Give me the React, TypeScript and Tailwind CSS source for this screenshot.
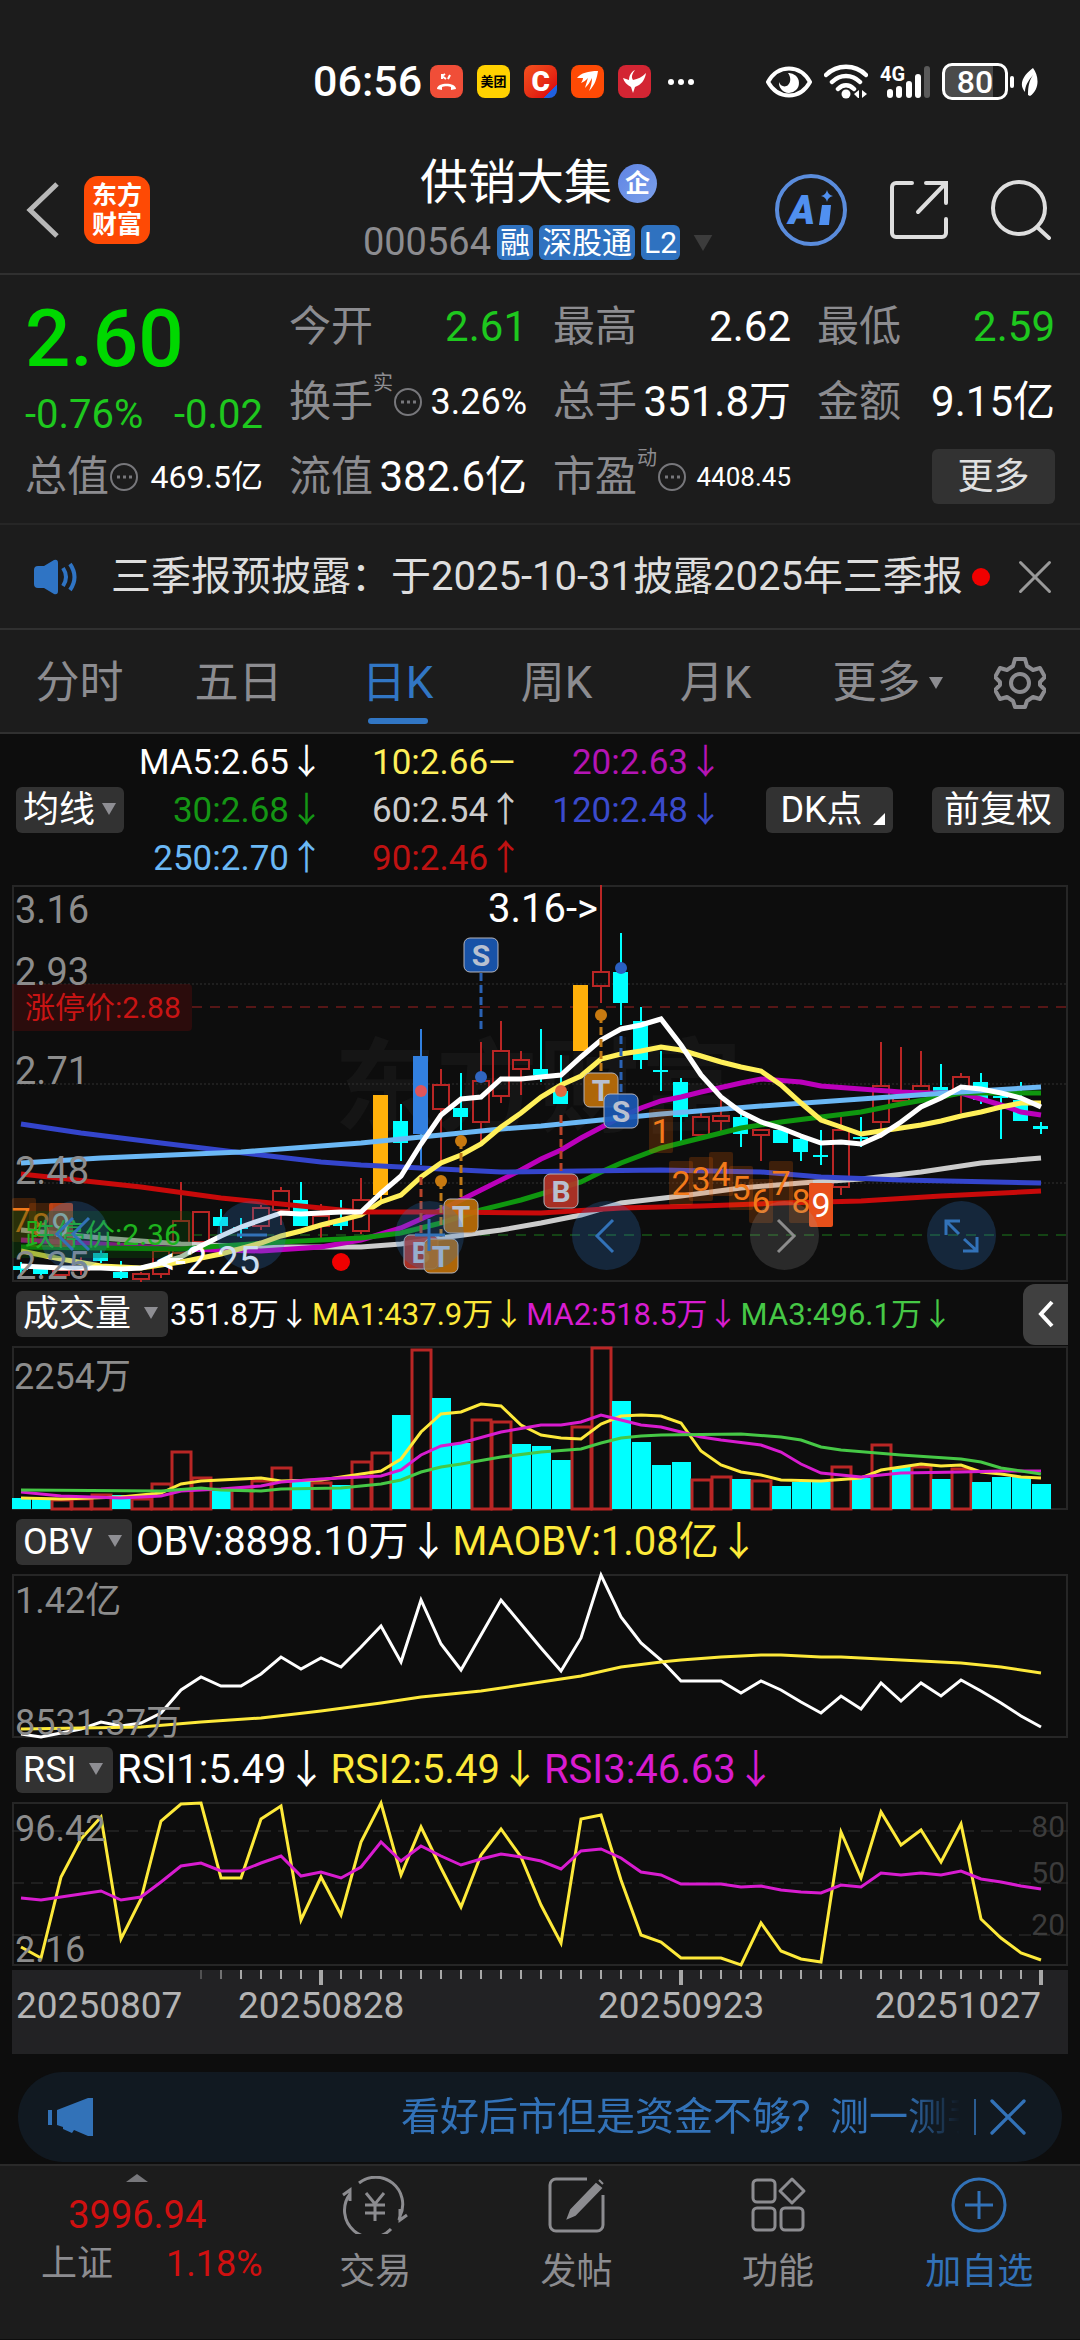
import { ReactNode } from 'react'
import { X } from 'lucide-react'

type Point = [number, number]
type Candle = [kind: string, high: number, top: number, bottom: number, low: number]

const CHART_W = 1056
const STEP = 20
const x = (i: number) => 9 + i * STEP
const sparse = (pts: Point[]) => pts.map(([i, y]) => `${x(i)},${y}`).join(' ')
const dense = (ys: number[]) => ys.map((y, i) => `${x(i)},${y}`).join(' ')

const RED = '#b92625'
const CYAN = '#00ffff'

// r = up, c = down, o / b = highlighted days
const candles: Candle[] = [
  ['c', 377, 381, 385, 389], ['c', 384, 384, 389, 391], ['r', 380, 385, 390, 392], ['r', 372, 378, 385, 390],
  ['c', 364, 368, 376, 378], ['c', 376, 387, 393, 394], ['r', 387, 389, 394, 397], ['r', 362, 366, 389, 393],
  ['r', 297, 336, 368, 372], ['r', 327, 327, 357, 365], ['c', 324, 332, 341, 348], ['c', 333, 342, 344, 353],
  ['r', 320, 323, 341, 345], ['r', 302, 306, 325, 340], ['c', 297, 315, 341, 341], ['r', 319, 331, 341, 357],
  ['c', 315, 335, 341, 345], ['r', 293, 315, 346, 349], ['o', 210, 210, 310, 315], ['c', 219, 236, 258, 276],
  ['b', 144, 171, 249, 280], ['r', 184, 200, 224, 277], ['c', 188, 223, 232, 245], ['r', 157, 196, 237, 260],
  ['r', 136, 166, 211, 218], ['r', 166, 175, 184, 210], ['c', 144, 184, 190, 197], ['c', 170, 206, 219, 219],
  ['o', 100, 100, 166, 166], ['r', 0, 87, 101, 118], ['c', 48, 87, 118, 140], ['c', 122, 136, 175, 184],
  ['c', 166, 185, 187, 206], ['c', 193, 197, 232, 256], ['r', 228, 232, 250, 251], ['r', 215, 231, 236, 247],
  ['c', 227, 232, 249, 262], ['r', 244, 245, 250, 276], ['c', 244, 245, 258, 258], ['c', 252, 254, 267, 276],
  ['c', 245, 270, 272, 280], ['r', 232, 245, 302, 310], ['c', 232, 252, 254, 262], ['r', 157, 201, 237, 253],
  ['r', 162, 213, 216, 217], ['r', 166, 201, 206, 207], ['c', 179, 202, 206, 206], ['r', 188, 192, 205, 228],
  ['c', 188, 197, 215, 219], ['c', 205, 211, 213, 254], ['c', 197, 215, 236, 236], ['c', 237, 241, 244, 249],
]

const ma5 = [
  381, 382, 383, 383, 383, 384, 383, 378, 372, 361, 351, 342, 335, 328, 329, 328, 327, 327, 308, 291, 259, 230, 214, 212,
  194, 194, 192, 190, 172, 155, 144, 140, 134, 160, 190, 212, 227, 237, 243, 251, 258, 257, 259, 250, 237, 222, 213, 202,
  204, 208, 213, 222,
]

const priceLines: { color: string; pts: Point[] }[] = [
  { color: '#cccccc', pts: [[0, 345], [4, 353], [8, 359], [12, 362], [17, 362], [19, 359], [21, 353], [24, 345], [26, 338], [28, 330], [30, 318], [33, 311], [36, 303], [39, 298], [42, 294], [45, 287], [48, 278], [51, 273]] },
  { color: '#bb00bb', pts: [[0, 355], [4, 359], [8, 364], [12, 366], [15, 362], [17, 355], [19, 343], [21, 325], [23, 305], [25, 285], [26, 274], [27, 265], [28, 253], [30, 232], [31, 223], [32, 216], [33, 212], [34, 207], [36, 198], [37, 194], [39, 197], [40, 201], [42, 204], [44, 207], [45, 208], [47, 208], [48, 214], [49, 220], [50, 227], [51, 230]] },
  { color: '#0f960f', pts: [[0, 362], [8, 364], [10, 361], [13, 357], [17, 353], [19, 348], [21, 338], [23, 325], [25, 315], [26, 309], [28, 297], [29, 287], [30, 278], [32, 263], [34, 253], [36, 243], [38, 237], [40, 232], [42, 227], [44, 219], [46, 212], [47, 208], [51, 208]] },
  { color: '#3445cc', pts: [[0, 239], [3, 248], [7, 258], [12, 270], [15, 277], [17, 280], [20, 283], [24, 287], [28, 286], [32, 285], [37, 287], [40, 292], [44, 295], [51, 298]] },
  { color: '#6bb8f5', pts: [[0, 278], [4, 273], [11, 267], [17, 258], [20, 252], [24, 244], [26, 241], [32, 229], [37, 221], [42, 214], [47, 207], [51, 202]] },
  { color: '#fff05a', pts: [[0, 366], [2, 374], [4, 381], [6, 383], [8, 377], [10, 369], [12, 358], [13, 351], [14, 346], [15, 340], [16, 335], [17, 330], [18, 317], [19, 310], [20, 292], [21, 278], [22, 270], [23, 259], [24, 242], [25, 228], [26, 212], [27, 200], [28, 191], [29, 174], [30, 169], [31, 166], [32, 162], [33, 165], [34, 171], [35, 177], [36, 182], [37, 186], [38, 200], [39, 218], [40, 235], [41, 242], [42, 249], [43, 246], [44, 243], [45, 240], [46, 236], [47, 231], [48, 227], [49, 222], [50, 218], [51, 218]] },
  { color: '#c80a0a', pts: [[0, 289], [6, 302], [10, 313], [13, 319], [17, 327], [21, 327], [26, 328], [30, 323], [34, 321], [38, 318], [42, 316], [46, 311], [51, 306]] },
]

const volumeTops = [
  152, 153, 153, 152, 148, 149, 152, 137, 105, 131, 145, 143, 134, 121, 133, 136, 139, 115, 106, 69, 3, 52, 97, 73, 75, 98,
  100, 114, 80, 1, 55, 96, 119, 116, 133, 130, 133, 134, 140, 136, 136, 120, 132, 98, 121, 120, 133, 122, 136, 131, 131, 138,
]
const volumeKinds = 'ccrrrcrrrrcrrrcrcrrcrccrrccc' + 'rrccccrrcrcccrcrcrcrcccc'

const volumeLines: { color: string; pts: Point[] }[] = [
  { color: '#fde93a', pts: [[0, 152], [2, 153], [5, 151], [7, 147], [8, 138], [9, 135], [11, 133], [12, 132], [13, 135], [15, 134], [16, 131], [17, 128], [18, 125], [19, 113], [20, 86], [21, 68], [22, 66], [23, 58], [24, 60], [25, 79], [26, 89], [27, 92], [28, 93], [29, 78], [30, 70], [31, 69], [32, 70], [33, 77], [34, 105], [35, 119], [36, 126], [37, 129], [38, 134], [40, 135], [42, 132], [43, 124], [44, 121], [45, 118], [46, 120], [47, 119], [48, 126], [49, 128], [50, 131], [51, 132]] },
  { color: '#d81cd0', pts: [[0, 146], [2, 150], [5, 152], [7, 150], [8, 145], [10, 143], [12, 140], [13, 136], [15, 133], [18, 130], [19, 124], [20, 109], [21, 100], [22, 97], [24, 86], [26, 79], [27, 79], [28, 76], [29, 69], [30, 74], [31, 79], [32, 81], [33, 86], [34, 91], [35, 94], [37, 99], [38, 106], [39, 118], [40, 127], [42, 131], [44, 127], [47, 126], [49, 125], [51, 125]] },
  { color: '#46c846', pts: [[0, 144], [7, 145], [9, 142], [10, 144], [12, 145], [13, 143], [16, 142], [18, 138], [19, 134], [20, 126], [21, 121], [22, 118], [24, 111], [26, 106], [28, 103], [29, 97], [30, 92], [31, 90], [32, 89], [36, 88], [38, 91], [39, 94], [40, 101], [41, 104], [44, 109], [47, 113], [48, 116], [49, 122], [50, 125], [51, 128]] },
]

const obv = [
  160, 163, 159, 155, 148, 152, 149, 139, 116, 103, 112, 112, 100, 83, 95, 84, 93, 73, 52, 88, 26, 70, 96, 61, 26, 50, 74,
  97, 64, 1, 43, 69, 86, 107, 107, 107, 119, 107, 116, 128, 139, 122, 135, 109, 127, 109, 122, 106, 117, 129, 142, 153,
]
const maObv: Point[] = [
  [0, 155], [3, 154], [6, 153], [9, 148], [12, 144], [15, 137], [18, 129], [20, 123], [23, 117], [26, 108], [28, 102],
  [30, 93], [32, 88], [33, 86], [35, 83], [37, 81], [38, 81], [40, 83], [41, 83], [44, 86], [47, 89], [49, 93], [51, 99],
]

const rsi2 = [
  145, 156, 75, 37, 15, 137, 97, 19, 2, 1, 76, 76, 17, 4, 118, 75, 113, 40, 1, 73, 25, 66, 105, 53, 27, 55, 103, 141, 17, 13,
  78, 133, 140, 156, 156, 156, 163, 121, 149, 157, 160, 30, 76, 10, 43, 28, 60, 22, 117, 136, 151, 158,
]
const rsi3 = [
  96, 98, 95, 92, 89, 98, 95, 80, 64, 61, 69, 69, 61, 54, 74, 70, 76, 65, 40, 59, 44, 54, 63, 57, 52, 55, 59, 67, 49, 47, 56,
  70, 73, 82, 82, 82, 85, 84, 88, 90, 91, 83, 85, 71, 73, 71, 73, 69, 77, 80, 84, 87,
]

const nine: { n: number; i: number; y: number }[] = [
  { n: 7, i: 0, y: 313 }, { n: 8, i: 1, y: 318 }, { n: 1, i: 32, y: 224 }, { n: 2, i: 33, y: 276 }, { n: 3, i: 34, y: 272 },
  { n: 4, i: 35, y: 267 }, { n: 5, i: 36, y: 281 }, { n: 6, i: 37, y: 294 }, { n: 7, i: 38, y: 276 }, { n: 8, i: 39, y: 294 },
]

const signals = [
  { letter: 'S', i: 23, y: 52, fill: '#1a5ab8', dot: 192, line: [88, 146], lineColor: '#2a62b4', dotColor: '#3066c0' },
  { letter: 'B', i: 20, y: 349, fill: '#b83428', dot: 206, line: [292, 349], lineColor: '#b8442a', dotColor: '#e0555a' },
  { letter: 'T', i: 21, y: 353, fill: '#c07008', dot: 296, line: [296, 353], lineColor: '#c07a18', dotColor: '#c87a10' },
  { letter: 'T', i: 22, y: 313, fill: '#c07008', dot: 256, line: [256, 313], lineColor: '#c07a18', dotColor: '#c87a10' },
  { letter: 'B', i: 27, y: 288, fill: '#b83428', dot: 206, line: [230, 288], lineColor: '#b8442a', dotColor: '#e06a40' },
  { letter: 'T', i: 29, y: 187, fill: '#c07008', dot: 130, line: [130, 187], lineColor: '#c07a18', dotColor: '#c87a10' },
  { letter: 'S', i: 30, y: 208, fill: '#1a5ab8', dot: 83, line: [151, 208], lineColor: '#2a62b4', dotColor: '#2a5fc0' },
]

function Frame({ height }: { height: number }) {
  return <rect x={1} y={1} width={CHART_W - 2} height={height - 2} fill="none" stroke="#262626" strokeWidth={2} />
}

function CandleShape({ candle, i }: { candle: Candle; i: number }) {
  const [kind, high, top, bottom, low] = candle
  const cx = x(i)
  if (kind === 'r') {
    return (
      <g stroke={RED} strokeWidth={2} fill="none">
        <path d={`M${cx} ${high}V${top}M${cx} ${bottom}V${low}`} />
        <rect x={cx - 8} y={top} width={16} height={bottom - top} />
      </g>
    )
  }
  const color = kind === 'c' ? CYAN : kind === 'o' ? '#ffb00a' : '#3280e0'
  return (
    <g>
      <path d={`M${cx} ${high}V${low}`} stroke={color} strokeWidth={2} />
      <rect x={cx - 8} y={top} width={15} height={Math.max(bottom - top, 2)} fill={color} />
    </g>
  )
}

function PriceChart() {
  return (
    <svg className="block w-full overflow-visible" viewBox="0 0 1056 397">
      <text x={322} y={239} fontSize={102} fontWeight={700} fill="#151515">东方财富</text>
      {[99, 199, 298].map((y) => (
        <path key={y} d={`M0 ${y}H1056`} stroke="#333" strokeDasharray="2 2" />
      ))}
      <Frame height={397} />
      <path d="M180 122H1056" stroke="#a02020" strokeWidth={1} strokeDasharray="10 8" />
      <path d="M180 350H1056" stroke="#1c7a1c" strokeWidth={1} strokeDasharray="10 8" />
      {candles.map((c, i) => (
        <CandleShape key={i} candle={c} i={i} />
      ))}
      <g fill="none" strokeWidth={5}>
        {priceLines.map((l) => (
          <polyline key={l.color} points={sparse(l.pts)} stroke={l.color} />
        ))}
        <polyline points={dense(ma5)} stroke="#ffffff" />
      </g>
      {signals.map((s) => (
        <g key={s.letter + s.i}>
          <path d={`M${x(s.i)} ${s.line[0]}V${s.line[1]}`} stroke={s.lineColor} strokeWidth={3} strokeDasharray="8 4" />
          <circle cx={x(s.i)} cy={s.dot} r={6} fill={s.dotColor} />
          <rect x={x(s.i) - 17} y={s.y + 1} width={34} height={34} rx={6} fill={s.fill} fillOpacity={0.9} stroke="#b4b4bc" strokeWidth={1} />
          <text x={x(s.i)} y={s.y + 29} fontSize={30} fontWeight={700} textAnchor="middle" fill="#b8c0d0">{s.letter}</text>
        </g>
      ))}
      {nine.map((m) => (
        <g key={`${m.n}-${m.i}`}>
          <rect x={Math.max(x(m.i) - 12, 0)} y={m.y} width={24} height={44} rx={2} fill="#ff6a00" fillOpacity={0.2} />
          <text x={x(m.i)} y={m.y + 34} fontSize={34} textAnchor="middle" fill="#f27a1a">{m.n}</text>
        </g>
      ))}
      <rect x={x(2) - 12} y={318} width={24} height={44} rx={2} fill="#e8501a" fillOpacity={0.75} />
      <text x={x(2)} y={352} fontSize={34} textAnchor="middle" fill="#e8e8e8">9</text>
      <rect x={x(40) - 12} y={298} width={24} height={44} rx={2} fill="#e8501a" />
      <text x={x(40)} y={332} fontSize={34} textAnchor="middle" fill="#ffffff">9</text>
      <circle cx={x(16)} cy={377} r={9} fill="#f00000" />

      <path d="M0 99H176a4 4 0 0 1 4 4V142a4 4 0 0 1-4 4H0z" fill="#500a0a" fillOpacity={0.45} />
      <text x={13} y={133} fontSize={30} fill="#c81414">涨停价:2.88</text>
      <path d="M0 326H176a4 4 0 0 1 4 4V369a4 4 0 0 1-4 4H0z" fill="#0a500a" fillOpacity={0.35} />
      <text x={13} y={360} fontSize={30} fill="#1eb41e">跌停价:2.36</text>

      <g fontSize={38} fill="#8c8c8c">
        <text x={3} y={38}>3.16</text>
        <text x={3} y={100}>2.93</text>
        <text x={3} y={199}>2.71</text>
        <text x={3} y={299}>2.48</text>
        <text x={3} y={394}>2.25</text>
      </g>
      <text x={586} y={37} fontSize={40} textAnchor="end" fill="#fff">3.16-&gt;</text>
      <text x={248} y={389} fontSize={38} textAnchor="end" fill="#fff">&lt;-2.25</text>
    </svg>
  )
}

function VolumeChart() {
  return (
    <svg className="block w-full overflow-visible" viewBox="0 0 1056 164">
      <Frame height={164} />
      {volumeTops.map((top, i) =>
        volumeKinds[i] === 'c' ? (
          <rect key={i} x={x(i) - 9} y={top} width={19} height={163 - top} fill={CYAN} />
        ) : (
          <rect key={i} x={x(i) - 9} y={top + 1} width={19} height={162 - top} fill="none" stroke={RED} strokeWidth={3} />
        ),
      )}
      {volumeLines.map((l) => (
        <polyline key={l.color} points={sparse(l.pts)} fill="none" stroke={l.color} strokeWidth={3} />
      ))}
      <text x={2} y={43} fontSize={36} fill="#8c8c8c">2254万</text>
    </svg>
  )
}

function ObvChart() {
  return (
    <svg className="block w-full overflow-visible" viewBox="0 0 1056 164">
      <Frame height={164} />
      <polyline points={dense(obv)} fill="none" stroke="#fff" strokeWidth={3} />
      <polyline points={sparse(maObv)} fill="none" stroke="#fde93a" strokeWidth={3} />
      <text x={3} y={39} fontSize={36} fill="#8c8c8c">1.42亿</text>
      <text x={3} y={161} fontSize={36} fill="#8c8c8c">8531.37万</text>
    </svg>
  )
}

function RsiChart() {
  return (
    <svg className="block w-full overflow-visible" viewBox="0 0 1056 164">
      <Frame height={164} />
      {[29, 81, 133].map((y) => (
        <path key={y} d={`M0 ${y}H1056`} stroke="#333" strokeDasharray="12 7" />
      ))}
      <g fontSize={30} fill="#3c3c3c" textAnchor="end">
        <text x={1053} y={35}>80</text>
        <text x={1053} y={81}>50</text>
        <text x={1053} y={133}>20</text>
      </g>
      <polyline points={dense(rsi2)} fill="none" stroke="#fde93a" strokeWidth={3} />
      <polyline points={dense(rsi3)} fill="none" stroke="#d81cd0" strokeWidth={3} />
      <text x={3} y={39} fontSize={36} fill="#8c8c8c">96.42</text>
      <text x={3} y={160} fontSize={36} fill="#8c8c8c">2.16</text>
    </svg>
  )
}

function TimeAxis() {
  const ticks = Array.from({ length: 43 }, (_, k) => k + 9)
  return (
    <svg className="mt-1 block w-full bg-[#222224]" viewBox="0 0 1056 84">
      {ticks.map((i) => {
        const major = i === 15 || i === 33 || i === 51
        return (
          <path
            key={i}
            d={`M${x(i)} 0V${major ? 15 : 9}`}
            stroke="#a8a8a8"
            strokeOpacity={i === 9 ? 0.35 : i === 10 ? 0.6 : 1}
            strokeWidth={major ? 4 : 2}
          />
        )
      })}
      <g fontSize={37} fill="#b4b4b4">
        <text x={4} y={48}>20250807</text>
        <text x={226} y={48}>20250828</text>
        <text x={586} y={48}>20250923</text>
        <text x={1029} y={48} textAnchor="end">20251027</text>
      </g>
    </svg>
  )
}

function DownTriangle({ className }: { className: string }) {
  return (
    <svg className={className} viewBox="0 0 14 12" fill="currentColor">
      <path d="M0 0h14L7 12z" />
    </svg>
  )
}

function IndicatorSelect({ value, label, width, tight }: { value: string; label: string; width: string; tight?: boolean }) {
  return (
    <div className="relative shrink-0">
      <select
        aria-label={label}
        defaultValue={value}
        className={`h-[46px] appearance-none rounded-md bg-[#323232] pl-[7px] text-[36px] leading-[46px] text-white ${width}`}
      >
        <option>{value}</option>
      </select>
      <DownTriangle className={`pointer-events-none absolute top-4 h-3 w-[14px] text-[#8e8e93] ${tight ? 'right-2' : 'right-[10px]'}`} />
    </div>
  )
}

function Reading({ children, className }: { children: ReactNode; className: string }) {
  return <span className={`whitespace-nowrap ${className}`}>{children}</span>
}

function StatusBar() {
  return (
    <div className="flex h-[159px] items-center pl-[313px] pr-10 pt-1 text-white">
      <span className="mr-2 text-[43px] font-medium leading-none">06:56</span>
      <div className="flex items-center gap-[14px]">
        <svg className="size-[33px]" viewBox="0 0 33 33">
          <rect width="33" height="33" rx="8" fill="#f04e38" />
          <path d="M7 24c0-7 19-7 19 0l-5 1v-3c-2-1-7-1-9 0v3z" fill="#fff" />
          <path d="M12 9v5M12 11l4 3M12 11l3-2M18 14l2-4" stroke="#fff" strokeWidth="2" fill="none" />
        </svg>
        <span className="flex size-[33px] items-center justify-center rounded-lg bg-[#ffd100] text-[13px] font-bold leading-none text-black">美团</span>
        <span className="flex size-[33px] items-center justify-center overflow-hidden rounded-lg bg-linear-135 from-[#f4501e] via-[#e01010] via-80% to-[#2060e0] to-80% text-[28px] font-black leading-none text-white">
          C
        </span>
        <svg className="size-[33px]" viewBox="0 0 33 33">
          <rect width="33" height="33" rx="8" fill="#fe4a05" />
          <path d="M6 13c4-5 11-7 21-7-1 7-3 14-9 20 2-5 3-9 3-13-2 4-4 7-7 10 1-4 2-7 3-10-2 2-4 4-7 5 1-2 2-3 2-5-2 0-4 0-6 0z" fill="#fff" />
        </svg>
        <svg className="size-[33px]" viewBox="0 0 33 33">
          <rect width="33" height="33" rx="8" fill="#d32533" />
          <path d="M17 5c-3 4-4 7-2 10 5-1 9-3 13-7-1 7-5 12-11 14l-2 6-2-6c-4-2-7-5-8-9l6 2c0-4 2-8 6-10z" fill="#fff" />
        </svg>
      </div>
      <svg className="ml-4 h-2 w-7" viewBox="0 0 28 8" fill="#fff">
        <circle cx="4" cy="4" r="3" />
        <circle cx="14" cy="4" r="3" />
        <circle cx="24" cy="4" r="3" />
      </svg>
      <div className="ml-auto flex items-center gap-3">
        <svg className="h-8 w-[46px]" viewBox="0 0 46 32">
          <path d="M2 16C12-2 34-2 44 16C34 34 12 34 2 16z" fill="none" stroke="#fff" strokeWidth="4" />
          <path d="M22 7a10 10 0 1 1-9 9c1 4 6 6 9 3s3-8 0-12z" fill="#fff" />
        </svg>
        <svg className="h-9 w-[44px]" viewBox="0 0 44 36">
          <path d="M2 11C13 0 31 0 42 11M8 18C16 10 28 10 36 18M14 25c5-5 11-5 16 0" fill="none" stroke="#fff" strokeWidth="4.500" strokeLinecap="round" />
          <circle cx="22" cy="30" r="4.500" fill="#fff" />
          <path d="M35 26v8h-1l-4-4zM38 26l5 4-5 4z" fill="#fff" />
        </svg>
        <div className="relative h-9 w-[50px]">
          <span className="absolute left-0 top-0 text-[20px] font-bold leading-5">4G</span>
          <svg className="h-9 w-full" viewBox="0 0 50 36" strokeWidth="6" strokeLinecap="round">
            <path d="M10 28v3M19 25v6M29 20v11M38 13v18" stroke="#fff" />
            <path d="M47 5v26" stroke="#5a5a5a" />
          </svg>
        </div>
        <div className="flex items-center gap-0.5">
          <span className="flex h-[37px] w-[66px] items-center justify-center rounded-[10px] border-3 border-white bg-linear-to-r from-[#4b4b4b] from-80% to-[#1c1c1c] to-80% text-[32px] font-medium leading-none">
            80
          </span>
          <span className="h-3 w-1 rounded-full bg-white" />
          <svg className="ml-1 h-8 w-[20px]" viewBox="0 0 20 32">
            <path d="M13 2c6 8 7 21-3 28l-2-1c0-8 1-14 5-20-5 6-8 11-8 17-8-9 1-19 8-24z" fill="#fff" />
          </svg>
        </div>
      </div>
    </div>
  )
}

function Header() {
  return (
    <header className="grid grid-cols-[1fr_auto_1fr] items-center border-b-2 border-[#303030] pb-[13px] pl-[26px] pr-[29px]">
      <div className="flex items-center gap-6">
        <button type="button" aria-label="返回" className="text-[#b8b8b8]">
          <svg className="h-14 w-[34px]" viewBox="0 0 34 56" fill="none" stroke="currentColor" strokeWidth="5">
            <path d="M31 2L4 28l27 26" />
          </svg>
        </button>
        <a href="#home" className="flex h-[68px] w-[66px] flex-col items-center justify-center rounded-[14px] bg-[#fe4a05] text-[25px] font-bold leading-[29px] text-white">
          <span>东方</span>
          <span>财富</span>
        </a>
      </div>
      <div className="flex flex-col items-center gap-[18px]">
        <div className="flex items-center gap-1.5">
          <h1 className="text-[48px] leading-[48px] text-white">供销大集</h1>
          <span className="flex size-[39px] items-center justify-center rounded-full bg-linear-to-br from-[#5f84e4] to-[#7ca0ea] text-[25px] font-bold leading-none text-white">企</span>
        </div>
        <div className="flex items-center gap-[6px] text-[30px] leading-[35px] text-white">
          <span className="text-[38px] text-[#8c8c90]">000564</span>
          <span className="rounded-md bg-[#2f72c0] px-[3px]">融</span>
          <span className="rounded-md bg-[#2f72c0] px-[3px]">深股通</span>
          <span className="rounded-md bg-[#2f72c0] px-[3px]">L2</span>
          <DownTriangle className="ml-1.5 h-4 w-[22px] text-[#3c3c3c]" />
        </div>
      </div>
      <div className="flex items-center justify-end gap-[43px] text-[#dedede]">
        <button type="button" aria-label="Ai">
          <svg className="size-[72px]" viewBox="0 0 72 72">
            <circle cx="36" cy="36" r="34" fill="none" stroke="#5a8cdc" strokeWidth="4" />
            <text x="27" y="50" fontSize="40" fontWeight="900" fontStyle="italic" textAnchor="middle" fill="#5090f0">A</text>
            <path d="M47 31h9l-2 20h-10z" fill="#5090f0" />
            <path d="M52 16q1 5 6 6q-5 1-6 6q-1-5-6-6q5-1 6-6z" fill="#5090f0" />
          </svg>
        </button>
        <button type="button" aria-label="分享">
          <svg className="size-[58px]" viewBox="0 0 58 58" fill="none" stroke="currentColor" strokeWidth="4" strokeLinecap="round">
            <path d="M22 2H6a4 4 0 0 0-4 4V52a4 4 0 0 0 4 4H52a4 4 0 0 0 4-4V38M36 2H56V22M55 3L28 31" />
          </svg>
        </button>
        <button type="button" aria-label="搜索">
          <svg className="size-[60px]" viewBox="0 0 60 60" fill="none" stroke="currentColor" strokeWidth="4" strokeLinecap="round">
            <circle cx="28" cy="28" r="26" />
            <path d="M46 47L58 58" />
          </svg>
        </button>
      </div>
    </header>
  )
}

function InfoDots() {
  return (
    <svg className="size-[30px] text-[#77777b]" viewBox="0 0 30 30" fill="none" stroke="currentColor" strokeWidth="2">
      <circle cx="15" cy="15" r="13" />
      <path d="M8 15h3M14 15h3M20 15h3" strokeWidth="3" />
    </svg>
  )
}

function Quote({ label, sup, info, value, className }: { label: string; sup?: string; info?: boolean; value: string; className: string }) {
  return (
    <div className="flex items-center justify-between whitespace-nowrap">
      <dt className="flex items-center text-[42px] leading-none text-[#8c8c90]">
        {label}
        {sup && <span className="-mt-2 self-start text-[20px] leading-none">{sup}</span>}
        {info && <InfoDots />}
      </dt>
      <dd className={`leading-none ${className}`}>{value}</dd>
    </div>
  )
}

function QuotePanel() {
  return (
    <dl className="grid auto-rows-[75px] grid-cols-4 gap-x-[26px] border-b-2 border-[#262626] px-[25px] pb-[9px] pt-[14px]">
      <div className="row-span-2 pt-3 text-[#00d800]">
        <div className="text-[80px] font-medium leading-[76px]">2.60</div>
        <div className="flex justify-between text-[40px] leading-[76px] text-[#1ec81e]">
          <span>-0.76%</span>
          <span>-0.02</span>
        </div>
      </div>
      <Quote label="今开" value="2.61" className="text-[42px] text-[#1ec81e]" />
      <Quote label="最高" value="2.62" className="text-[42px] text-white" />
      <Quote label="最低" value="2.59" className="text-[42px] text-[#1ec81e]" />
      <Quote label="换手" sup="实" info value="3.26%" className="text-[36px] text-white" />
      <Quote label="总手" value="351.8万" className="text-[42px] text-white" />
      <Quote label="金额" value="9.15亿" className="text-[42px] text-white" />
      <Quote label="总值" info value="469.5亿" className="text-[32px] text-white" />
      <Quote label="流值" value="382.6亿" className="text-[42px] text-white" />
      <Quote label="市盈" sup="动" info value="4408.45" className="text-[26px] text-white" />
      <div className="flex items-center justify-end">
        <button type="button" className="h-[55px] w-[123px] rounded-md bg-[#323232] text-[36px] leading-none text-[#e0e0e0]">更多</button>
      </div>
    </dl>
  )
}

function Notice() {
  return (
    <div className="flex h-[105px] items-center border-b-2 border-[#303030] pl-[33px] pr-4">
      <svg className="h-9 w-[46px] shrink-0 text-[#2f74c4]" viewBox="0 0 46 36">
        <path d="M1 11q0-4 4-4h6l10-6q4-1 4 3v28q0 4-4 3l-10-6H5q-4 0-4-4z" fill="currentColor" />
        <path d="M30 9q6 9 0 18M37 5q9 13 0 26" fill="none" stroke="currentColor" strokeWidth="4" />
      </svg>
      <p className="ml-8 whitespace-nowrap text-[40px] leading-none text-[#dedede]">三季报预披露：于2025-10-31披露2025年三季报</p>
      <span className="ml-auto size-[18px] shrink-0 rounded-full bg-[#f00000]" />
      <button type="button" aria-label="关闭" className="ml-4 shrink-0 text-[#9a9a9a]">
        <X className="size-[58px]" strokeWidth={1.25} />
      </button>
    </div>
  )
}

function Tabs() {
  const tabs = ['分时', '五日', '日K', '周K', '月K']
  return (
    <nav className="flex h-[104px] border-b-2 border-[#303030] pr-5 text-[44px] leading-none text-[#8c8c90]">
      {tabs.map((t) => (
        <button key={t} type="button" className={`relative flex-[159] pt-1 ${t === '日K' ? 'text-[#3176c4]' : ''}`}>
          {t}
          {t === '日K' && <span className="absolute bottom-2 left-1/2 h-[6px] w-[60px] -translate-x-1/2 rounded-full bg-[#3176c4]" />}
        </button>
      ))}
      <button type="button" className="flex flex-[185] items-center justify-center gap-2 pt-1">
        更多
        <DownTriangle className="h-3 w-[14px]" />
      </button>
      <button type="button" aria-label="设置" className="flex flex-[80] items-center justify-center pt-1">
        <svg className="size-[52px]" viewBox="0 0 52 52" fill="none" stroke="currentColor" strokeWidth="4" strokeLinejoin="round">
          <path d="M21 2h10l2 7 6 4 7-2 5 9-5 5v3l5 5-5 9-7-2-6 4-2 6H21l-2-6-6-4-7 2-5-9 5-5v-3l-5-5 5-9 7 2 6-4z" />
          <circle cx="26" cy="26" r="9" />
        </svg>
      </button>
    </nav>
  )
}

function MaRow() {
  return (
    <div className="flex items-center px-4 pb-[3px] pt-1">
      <IndicatorSelect value="均线" label="主图指标" width="w-[108px]" tight />
      <div className="grid auto-rows-[48px] grid-cols-[200px_196px_203px] items-center text-[35px] leading-none">
        <Reading className="text-right text-white">MA5:2.65↓</Reading>
        <Reading className="pl-12 text-[#fff05a]">10:2.66—</Reading>
        <Reading className="text-right text-[#b414b4]">20:2.63↓</Reading>
        <Reading className="text-right text-[#149614]">30:2.68↓</Reading>
        <Reading className="pl-12 text-[#cccccc]">60:2.54↑</Reading>
        <Reading className="text-right text-[#3a4acc]">120:2.48↓</Reading>
        <Reading className="text-right text-[#6bb8f5]">250:2.70↑</Reading>
        <Reading className="pl-12 text-[#c01212]">90:2.46↑</Reading>
      </div>
      <div className="ml-auto flex gap-[39px] text-[36px] leading-none text-white">
        <button type="button" className="relative h-[46px] w-[127px] rounded-md bg-[#323232] pr-4">
          DK点
          <svg className="absolute bottom-2 right-2 size-3" viewBox="0 0 12 12" fill="currentColor">
            <path d="M12 0v12H0z" />
          </svg>
        </button>
        <button type="button" className="h-[46px] w-[132px] rounded-md bg-[#323232]">前复权</button>
      </div>
    </div>
  )
}

function ChartControls() {
  const items = [
    { label: '最左', d: 'M33 17L17 33l16 16M49 17L33 33l16 16' },
    { label: '缩小', d: 'M20 34h30' },
    { label: '放大', d: 'M20 34h30M34 18v32' },
    { label: '左移', d: 'M41 19L25 35l16 16' },
    { label: '右移', d: 'M28 19L44 35 28 51', muted: true },
    { label: '全屏', d: 'M19 34V20h14M20 21l12 12M50 36v14H36M49 49L37 38' },
  ]
  return (
    <div className="absolute inset-x-0 bottom-3 flex justify-between pl-7 pr-[72px]">
      {items.map((it) => (
        <button
          key={it.label}
          type="button"
          aria-label={it.label}
          className={`size-[69px] rounded-full ${it.muted ? 'bg-[#a0a0a0]/20 text-[#8c8c8c]' : 'bg-[#3076c8]/25 text-[#3272b8]'}`}
        >
          <svg viewBox="0 0 69 69" fill="none" stroke="currentColor" strokeWidth="3">
            <path d={it.d} />
          </svg>
        </button>
      ))}
    </div>
  )
}

function PromoBar() {
  return (
    <div className="mx-[18px] mt-[18px] flex h-[90px] items-center rounded-full bg-[#111921] pl-[30px] pr-[22px] text-[#3272b8]">
      <svg className="h-10 w-[46px] shrink-0" viewBox="0 0 46 40" fill="currentColor">
        <path d="M0 13h4v15H0zM9 13L40 1h5v38h-5l-14-6-2 3-9-4v-2l-6-2z" />
      </svg>
      <p className="ml-auto w-[559px] overflow-hidden whitespace-nowrap mask-r-from-90% text-[39px] leading-[48px]">看好后市但是资金不够？测一测手</p>
      <span className="ml-[14px] h-9 w-0.5 bg-[#2a5c92]" />
      <button type="button" aria-label="关闭">
        <X className="size-16" strokeWidth={1.25} />
      </button>
    </div>
  )
}

function NavItem({ label, active, children }: { label: string; active?: boolean; children: ReactNode }) {
  return (
    <button type="button" className={`flex flex-[201] flex-col items-center pt-[10px] ${active ? 'text-[#3272b8]' : 'text-[#8c8c90]'}`}>
      <svg className="h-[58px] w-[66px]" viewBox="0 0 66 58" fill="none" stroke="currentColor" strokeWidth="3">
        {children}
      </svg>
      <span className="mt-[14px] text-[36px] leading-[48px]">{label}</span>
    </button>
  )
}

function BottomNav() {
  return (
    <nav className="mt-0.5 flex h-[175px] border-t-2 border-[#2a2a2a] bg-[#1c1c1c]">
      <button type="button" className="flex flex-[274] flex-col items-center pt-2">
        <svg className="h-2 w-[22px] text-[#77777b]" viewBox="0 0 22 8" fill="currentColor">
          <path d="M11 0l11 8H0z" />
        </svg>
        <span className="mt-2 text-[38px] leading-[50px] text-[#d01010]">3996.94</span>
        <span className="flex w-full justify-between pl-[41px] pr-3 text-[36px] leading-[48px]">
          <span className="text-[#8c8c90]">上证</span>
          <span className="text-[#d01010]">1.18%</span>
        </span>
      </button>
      <NavItem label="交易">
        <path d="M17 7A27 27 0 0 1 58 40l-1 4M49 53A27 27 0 0 1 8 18M1 19l7-5v11M65 39l-7 5V33" />
        <path d="M24 17l9 11 9-11M33 28v17M23 29h20M23 37h20" />
      </NavItem>
      <NavItem label="发帖">
        <path d="M43 3H12a6 6 0 0 0-6 6V49a6 6 0 0 0 6 6H53a6 6 0 0 0 6-6V19" />
        <path d="M52 8l5 4-26 27-7 3 3-8zM55 4l4 4" fill="currentColor" strokeWidth="2" />
      </NavItem>
      <NavItem label="功能">
        <rect x="8" y="4" width="22" height="22" rx="4" />
        <rect x="8" y="32" width="22" height="22" rx="4" />
        <rect x="36" y="32" width="22" height="22" rx="4" />
        <path d="M47 3l12 12-12 12-12-12z" strokeLinejoin="round" />
      </NavItem>
      <NavItem label="加自选" active>
        <circle cx="33" cy="29" r="26" />
        <path d="M33 15v28M19 29h28" />
      </NavItem>
    </nav>
  )
}

export default function App() {
  return (
    <div className='min-h-screen w-full overflow-hidden bg-[#0d0d0d] font-[Roboto,"Noto_Sans_CJK_SC",sans-serif]'>
      <div className="bg-[#1c1c1c]">
        <StatusBar />
        <Header />
        <QuotePanel />
        <Notice />
        <Tabs />
      </div>
      <MaRow />
      <main className="px-3">
        <div className="relative">
          <PriceChart />
          <ChartControls />
        </div>
        <div className="flex h-16 items-center gap-0.5 pl-1 text-[31px] leading-none">
          <IndicatorSelect value="成交量" label="副图指标一" width="w-[152px]" />
          <Reading className="text-white">351.8万↓</Reading>
          <Reading className="text-[#fde93a]">MA1:437.9万↓</Reading>
          <Reading className="text-[#d81cd0]">MA2:518.5万↓</Reading>
          <Reading className="text-[#46c846]">MA3:496.1万↓</Reading>
          <button type="button" aria-label="展开" className="ml-auto flex h-[61px] w-[45px] items-center justify-center rounded-l-xl bg-[#404040] text-white">
            <svg className="h-7 w-4" viewBox="0 0 16 28" fill="none" stroke="currentColor" strokeWidth="4">
              <path d="M14 2L3 14l11 12" />
            </svg>
          </button>
        </div>
        <VolumeChart />
        <div className="flex h-16 items-center gap-1 pl-1 text-[40px] leading-none">
          <IndicatorSelect value="OBV" label="副图指标二" width="w-[116px]" />
          <Reading className="text-white">OBV:8898.10万↓</Reading>
          <Reading className="text-[#fde93a]">MAOBV:1.08亿↓</Reading>
        </div>
        <ObvChart />
        <div className="flex h-16 items-center gap-1 pl-1 text-[40px] leading-none">
          <IndicatorSelect value="RSI" label="副图指标三" width="w-[97px]" />
          <Reading className="text-white">RSI1:5.49↓</Reading>
          <Reading className="text-[#fde93a]">RSI2:5.49↓</Reading>
          <Reading className="text-[#d81cd0]">RSI3:46.63↓</Reading>
        </div>
        <RsiChart />
        <TimeAxis />
      </main>
      <PromoBar />
      <BottomNav />
    </div>
  )
}
